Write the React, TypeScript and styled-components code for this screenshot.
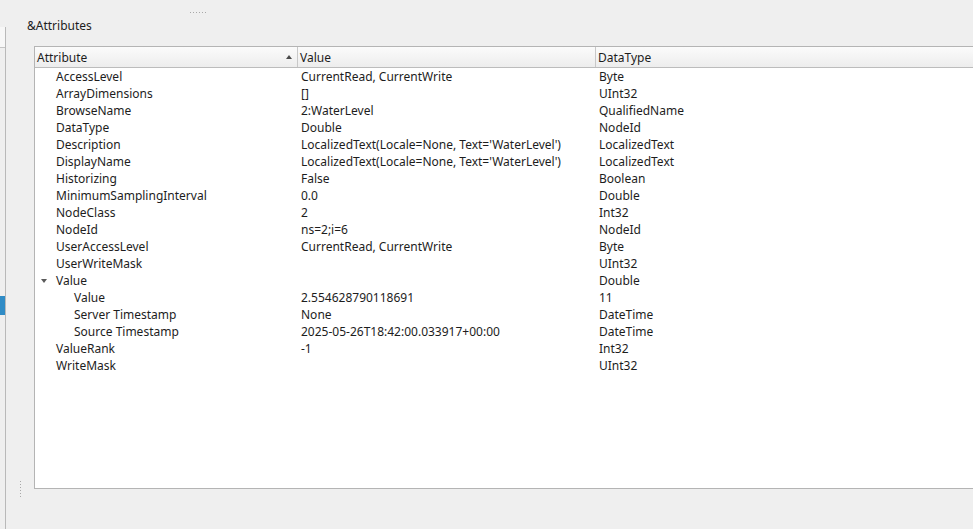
import React from "react";
import styled, { createGlobalStyle } from "styled-components";

const Global = createGlobalStyle`
  html, body { margin: 0; padding: 0; }
  body {
    background: #efefef;
    font-family: "Noto Sans", "DejaVu Sans", sans-serif;
    font-size: 12px;
    color: #1d1d1d;
  }
`;

const Root = styled.div`
  display: flex;
  width: 973px;
  height: 529px;
  overflow: hidden;
  background: #efefef;
`;

const LeftPane = styled.div`
  width: 5px;
  margin-top: 27px;
  border-right: 1px solid #b9b9b9;
  display: flex;
  flex-direction: column;
`;

const LeftHeader = styled.div`
  height: 20px;
  background: #f7f7f7;
  border-bottom: 1px solid #c4c4c4;
`;

const LeftSelected = styled.div`
  margin-top: 248px;
  height: 19px;
  background: #308cc6;
`;

const Main = styled.div`
  flex: 1;
  display: flex;
  flex-direction: column;
  min-width: 0;
`;

const TopHandleRow = styled.div`
  height: 14px;
  display: flex;
  align-items: flex-end;
  padding-left: 183px;
`;

const HDots = styled.div`
  width: 17px;
  height: 1px;
  margin-bottom: 1px;
  background-image: radial-gradient(circle, #a8a8a8 0.7px, transparent 0.8px);
  background-size: 3px 1px;
`;

const GroupLabel = styled.div`
  height: 17px;
  line-height: 17px;
  padding-left: 21px;
  margin-top: 3px;
`;

const Body = styled.div`
  display: flex;
  margin-top: 12px;
  height: 443px;
`;

const VHandleCol = styled.div`
  width: 28px;
  display: flex;
  flex-direction: column;
  align-items: flex-start;
  padding-left: 14px;
  box-sizing: border-box;
`;

const VDots = styled.div`
  width: 1px;
  height: 17px;
  margin-top: auto;
  margin-bottom: -8px;
  background-image: radial-gradient(circle, #a8a8a8 0.7px, transparent 0.8px);
  background-size: 1px 3px;
`;

const Table = styled.div`
  flex: 1;
  margin-right: -8px;
  border: 1px solid #b4b4b4;
  background: #ffffff;
  display: flex;
  flex-direction: column;
`;

const Grid = styled.div`
  display: grid;
  grid-template-columns: 263px 298px 1fr;
`;

const HeaderRow = styled(Grid)`
  height: 20px;
  background: linear-gradient(#fbfbfb, #ededed);
  border-bottom: 1px solid #bcbcbc;
`;

const HeaderCell = styled.div<{ $sep?: boolean }>`
  position: relative;
  display: flex;
  align-items: center;
  padding-left: 2px;
  padding-top: 1px;
  line-height: 19px;
  border-right: ${(p) => (p.$sep ? "1px solid #c8c8c8" : "none")};
`;

const SortArrow = styled.div`
  position: absolute;
  right: 5px;
  top: 8px;
  width: 0;
  height: 0;
  border-left: 3.5px solid transparent;
  border-right: 3.5px solid transparent;
  border-bottom: 4px solid #4a4a4a;
`;

const Row = styled(Grid)`
  height: 17px;
  line-height: 17px;
`;

const NameCell = styled.div<{ $level: number }>`
  position: relative;
  padding-left: ${(p) => 21 + (p.$level - 1) * 18}px;
  white-space: nowrap;
`;

const Cell = styled.div`
  padding-left: 3px;
  white-space: nowrap;
  overflow: hidden;
`;

const Expander = styled.div`
  position: absolute;
  left: 6px;
  top: 7px;
  width: 0;
  height: 0;
  border-left: 3.5px solid transparent;
  border-right: 3.5px solid transparent;
  border-top: 4px solid #5a5a5a;
`;

type R = { name: string; value: string; type: string; level: number; open?: boolean };

const rows: R[] = [
  { name: "AccessLevel", value: "CurrentRead, CurrentWrite", type: "Byte", level: 1 },
  { name: "ArrayDimensions", value: "[]", type: "UInt32", level: 1 },
  { name: "BrowseName", value: "2:WaterLevel", type: "QualifiedName", level: 1 },
  { name: "DataType", value: "Double", type: "NodeId", level: 1 },
  { name: "Description", value: "LocalizedText(Locale=None, Text='WaterLevel')", type: "LocalizedText", level: 1 },
  { name: "DisplayName", value: "LocalizedText(Locale=None, Text='WaterLevel')", type: "LocalizedText", level: 1 },
  { name: "Historizing", value: "False", type: "Boolean", level: 1 },
  { name: "MinimumSamplingInterval", value: "0.0", type: "Double", level: 1 },
  { name: "NodeClass", value: "2", type: "Int32", level: 1 },
  { name: "NodeId", value: "ns=2;i=6", type: "NodeId", level: 1 },
  { name: "UserAccessLevel", value: "CurrentRead, CurrentWrite", type: "Byte", level: 1 },
  { name: "UserWriteMask", value: "", type: "UInt32", level: 1 },
  { name: "Value", value: "", type: "Double", level: 1, open: true },
  { name: "Value", value: "2.554628790118691", type: "11", level: 2 },
  { name: "Server Timestamp", value: "None", type: "DateTime", level: 2 },
  { name: "Source Timestamp", value: "2025-05-26T18:42:00.033917+00:00", type: "DateTime", level: 2 },
  { name: "ValueRank", value: "-1", type: "Int32", level: 1 },
  { name: "WriteMask", value: "", type: "UInt32", level: 1 },
];

export default function App() {
  return (
    <>
      <Global />
      <Root>
        <LeftPane>
          <LeftHeader />
          <LeftSelected />
        </LeftPane>
        <Main>
          <TopHandleRow>
            <HDots />
          </TopHandleRow>
          <GroupLabel>&amp;Attributes</GroupLabel>
          <Body>
            <VHandleCol>
              <VDots />
            </VHandleCol>
            <Table>
              <HeaderRow>
                <HeaderCell $sep>
                  Attribute
                  <SortArrow />
                </HeaderCell>
                <HeaderCell $sep>Value</HeaderCell>
                <HeaderCell>DataType</HeaderCell>
              </HeaderRow>
              {rows.map((r, i) => (
                <Row key={i}>
                  <NameCell $level={r.level}>
                    {r.open && <Expander />}
                    {r.name}
                  </NameCell>
                  <Cell>{r.value}</Cell>
                  <Cell>{r.type}</Cell>
                </Row>
              ))}
            </Table>
          </Body>
        </Main>
      </Root>
    </>
  );
}
